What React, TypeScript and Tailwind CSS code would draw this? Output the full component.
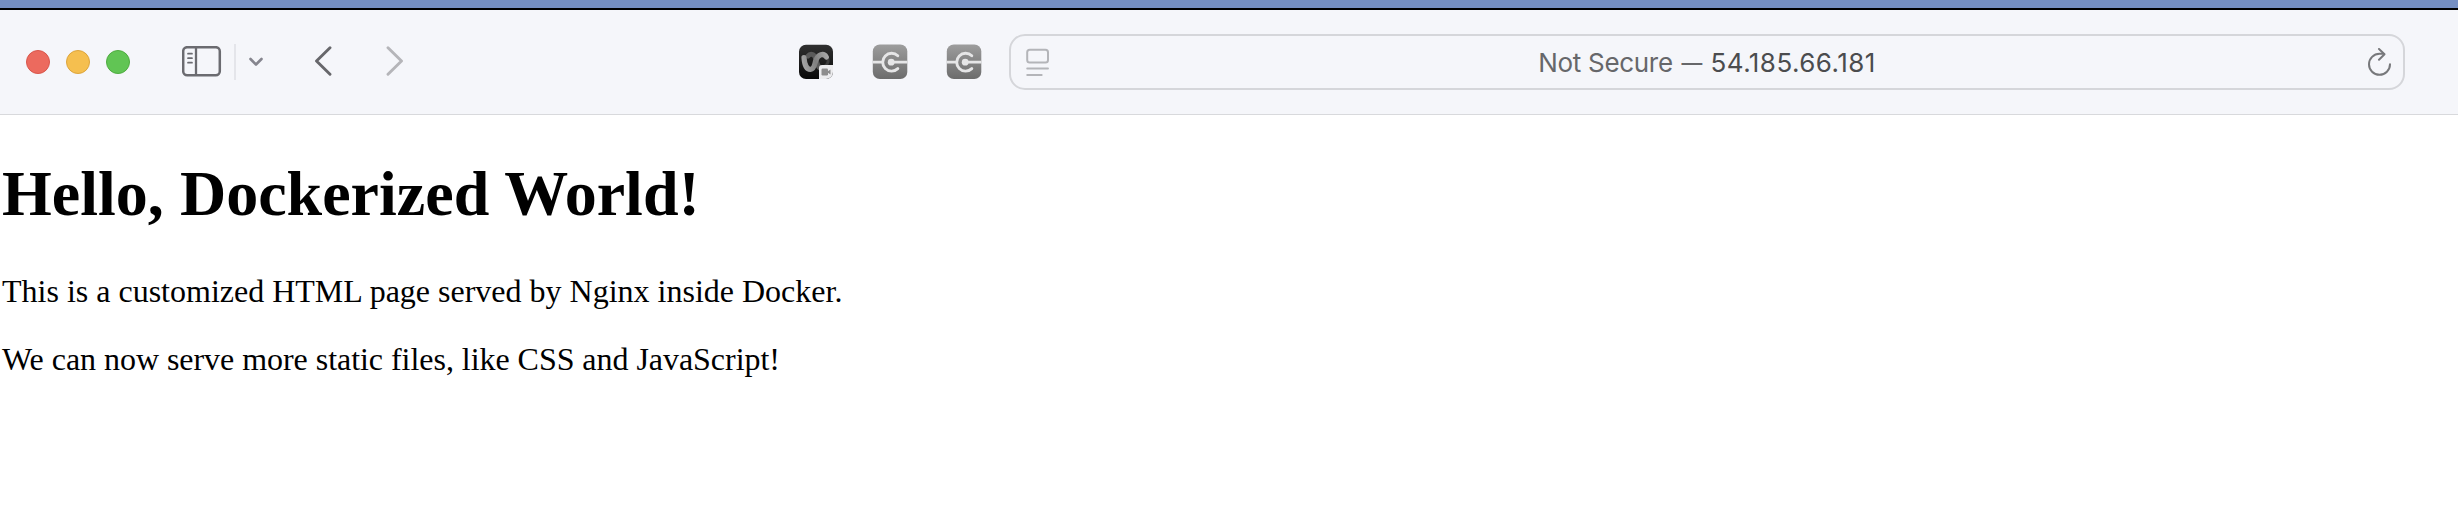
function SidebarIcon() {
  return (
    <svg width="40" height="32" viewBox="0 0 40 32" fill="none" stroke="#6b6b70" className="shrink-0">
      <rect x="1.2" y="1.2" width="36.6" height="28" rx="4" strokeWidth="2.5" />
      <path d="M14 1.2v28" strokeWidth="2.3" />
      <path d="M6 7.700h4M6 12.200h4M6 16.700h4" strokeWidth="1.700" strokeLinecap="round" />
    </svg>
  );
}

function MeetingExtensionIcon() {
  return (
    <svg width="36" height="36" viewBox="0 0 36 36" className="shrink-0">
      <defs>
        <linearGradient id="ribbon" gradientUnits="userSpaceOnUse" x1="4" y1="20" x2="30" y2="12">
          <stop offset="0" stopColor="#a6a6a6" />
          <stop offset="0.5" stopColor="#808080" />
          <stop offset="1" stopColor="#a8a8a8" />
        </linearGradient>
        <linearGradient id="dark" x1="0" y1="0" x2="0" y2="1">
          <stop offset="0" stopColor="#303030" />
          <stop offset="1" stopColor="#090909" />
        </linearGradient>
      </defs>
      <rect x="1" y="0.800" width="34" height="34.200" rx="7" fill="url(#dark)" />
      <g fill="none" strokeLinecap="round">
        <path d="M10 12C12 9.500 16 9.500 17.500 14C19 18 19 22 22 24" stroke="#5a5a5a" strokeWidth="5" />
        <path d="M30 15C31 19 28 22 25 23" stroke="#3c3c3c" strokeWidth="3" />
        <path d="M6 13.500C6.500 21 9 25.500 12.500 25.300C17 25 16.500 19 18 16C20 10.500 25.500 8.500 28.300 13" stroke="url(#ribbon)" strokeWidth="5.200" />
      </g>
      <path d="M21 24a3 3 0 0 1 3-3h11v7a7 7 0 0 1-7 7h-7z" fill="#ececee" />
      <rect x="23.500" y="24.500" width="6.500" height="7" rx="1.200" fill="#8d8d8d" />
      <path d="M29.500 27.500l3-2v5l-3-2z" fill="#8d8d8d" />
    </svg>
  );
}

function ConnectorExtensionIcon({ id }: { id: string }) {
  return (
    <svg width="36" height="36" viewBox="0 0 36 36" className="shrink-0">
      <defs>
        <linearGradient id={id} x1="0" y1="0" x2="0" y2="1">
          <stop offset="0" stopColor="#9d9d9d" />
          <stop offset="1" stopColor="#6c6c6c" />
        </linearGradient>
      </defs>
      <rect x="0.800" y="0.500" width="34.500" height="34.500" rx="7" fill={`url(#${id})`} />
      <g fill="none" stroke="#e6e6e7">
        <path d="M25.800 11.800a8.900 8.900 0 1 0 0 12.800" strokeWidth="2.900" strokeLinecap="round" />
        <path d="M0.800 18.200h9.200M19 18.200h16.300" strokeWidth="2.800" />
      </g>
      <circle cx="19.200" cy="18.200" r="3.400" fill="#e6e6e7" />
    </svg>
  );
}

function Toolbar() {
  return (
    <header className="flex h-[105px] items-center border-b border-[#d8d9dc] bg-[#f5f6fa] pl-[26px] pr-[53px]">
      <div className="flex shrink-0 gap-4">
        <span className="size-6 rounded-full border border-[#d9564b] bg-[#ec6a5e]" />
        <span className="size-6 rounded-full border border-[#dda53c] bg-[#f5bf4f]" />
        <span className="size-6 rounded-full border border-[#4fac40] bg-[#61c554]" />
      </div>
      <div className="ml-[52px] flex shrink-0 items-center">
        <SidebarIcon />
        <span className="ml-3 h-9 w-0.5 bg-[#e4e5ea]" />
        <svg width="16" height="12" viewBox="0 0 16 12" fill="none" className="ml-3">
          <path d="M2.500 3l5.500 5.500L13.500 3" stroke="#85858e" strokeWidth="2.600" strokeLinecap="round" strokeLinejoin="round" />
        </svg>
      </div>
      <div className="ml-[50px] flex shrink-0 gap-[54px]">
        <svg width="18" height="32" viewBox="0 0 18 32" fill="none">
          <path d="M16 1.700L2.500 15 16 28.300" stroke="#67676b" strokeWidth="2.900" strokeLinecap="round" strokeLinejoin="round" />
        </svg>
        <svg width="18" height="32" viewBox="0 0 18 32" fill="none">
          <path d="M2 1.700L15.500 15 2 28.300" stroke="#b5b5b9" strokeWidth="2.900" strokeLinecap="round" strokeLinejoin="round" />
        </svg>
      </div>
      <div className="ml-auto flex shrink-0 gap-[38px]">
        <MeetingExtensionIcon />
        <ConnectorExtensionIcon id="connector-a" />
        <ConnectorExtensionIcon id="connector-b" />
      </div>
      <div className="ml-[27px] flex h-14 w-[1396px] shrink-0 items-center rounded-2xl border-2 border-[#d5d6da] pl-[15px] pr-[11px]">
        <svg width="24" height="28" viewBox="0 0 24 28" fill="none" stroke="#b4b5b9" strokeLinecap="round">
          <rect x="1.200" y="1.800" width="20.800" height="12.800" rx="2.500" strokeWidth="2" />
          <path d="M1.200 20.500h20.800M1.200 27h14.500" strokeWidth="1.900" />
        </svg>
        <p className="flex-1 whitespace-pre pr-[4px] pt-0.5 text-center font-['Inter',sans-serif] text-[26px] leading-8 tracking-[-0.3px] text-[#66676a]">
          Not Secure <span className="-mx-px inline-block scale-x-80">—</span>{' '}
          <span className="tracking-[0.450px] text-[#4b4c4e]">54.185.66.181</span>
        </p>
        <svg width="24" height="28" viewBox="0 0 24 28" fill="none" stroke="#77787b" strokeWidth="2" strokeLinecap="round" strokeLinejoin="round">
          <path d="M22 16.300A10.500 10.500 0 1 1 11.500 5.800h4" />
          <path d="M11 1l5.500 5.300-5.500 5.500" />
        </svg>
      </div>
    </header>
  );
}

export default function App() {
  return (
    <div className="flex h-[508px] w-[2458px] flex-col overflow-hidden bg-white">
      <div className="h-2.5 shrink-0 border-b-2 border-black bg-[#758fc2]" />
      <Toolbar />
      <main className="flex flex-col pl-[2px] font-['Liberation_Serif',serif] text-black">
        <h1 className="mt-[43px] text-[64px] font-bold leading-[72px] tracking-[0.020px]">Hello, Dockerized World!</h1>
        <p className="mt-[43px] text-[32px] leading-9">This is a customized HTML page served by Nginx inside Docker.</p>
        <p className="mt-8 text-[32px] leading-9 tracking-[-0.040px]">We can now serve more static files, like CSS and JavaScript!</p>
      </main>
    </div>
  );
}
